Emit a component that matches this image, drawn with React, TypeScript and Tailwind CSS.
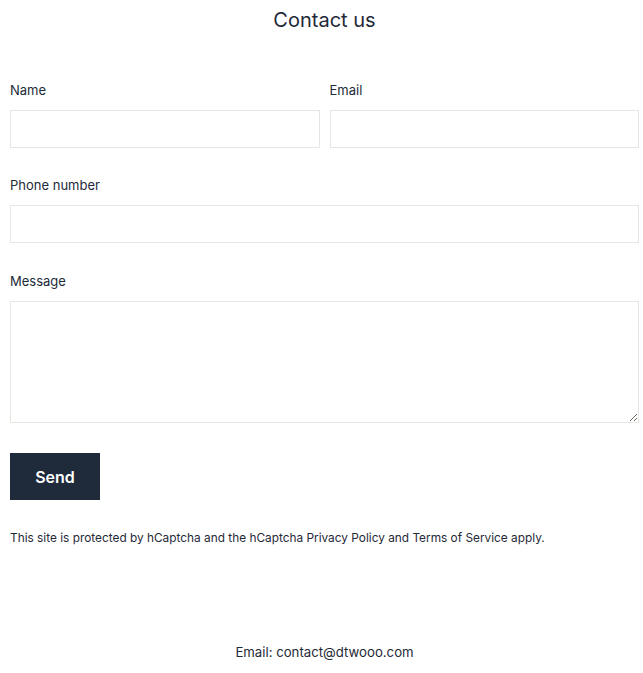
export default function App() {
  const font = { fontFamily: '"Inter", "Noto Sans", sans-serif' };
  const inputCls = 'w-full h-[38px] border border-[#e8e6e1] bg-white outline-none px-3 text-[13px]';
  return (
    <div className="min-h-[673px] bg-white text-[#1f2937] font-['Inter',sans-serif]" style={font}>
      <div className="pl-[10px] pr-[4px]">
        <h1 className="text-center text-[20px] leading-[24px] pt-[8px] font-normal text-[#1f2937]">Contact us</h1>
        <form className="mt-[48px] flex flex-col" onSubmit={(e) => e.preventDefault()}>
          <div className="grid grid-cols-2 gap-[10px]">
            <div className="flex flex-col">
              <label className="text-[13px] leading-[20px] text-[#222b38]">Name</label>
              <input type="text" className={inputCls + ' mt-[10px]'} />
            </div>
            <div className="flex flex-col">
              <label className="text-[13px] leading-[20px] text-[#222b38]">Email</label>
              <input type="email" className={inputCls + ' mt-[10px]'} />
            </div>
          </div>
          <div className="flex flex-col mt-[27px]">
            <label className="text-[13px] leading-[20px] text-[#222b38]">Phone number</label>
            <input type="tel" className={inputCls + ' mt-[10px]'} />
          </div>
          <div className="flex flex-col mt-[28px]">
            <label className="text-[13px] leading-[20px] text-[#222b38]">Message</label>
            <textarea className="w-full h-[122px] mt-[10px] border border-[#e8e6e1] bg-white outline-none p-3 text-[13px]" />
          </div>
          <div className="mt-[30px]">
            <button type="submit" className="w-[90px] h-[47px] bg-[#1f2a3a] text-white text-[16px] font-semibold">
              Send
            </button>
          </div>
          <p className="mt-[29px] text-[11.85px] leading-[18px] text-[#1f2937]">
            This site is protected by hCaptcha and the hCaptcha Privacy Policy and Terms of Service apply.
          </p>
        </form>
        <p className="text-center mt-[95px] text-[13.2px] leading-[20px] text-[#1f2937]">Email: contact@dtwooo.com</p>
      </div>
    </div>
  );
}
